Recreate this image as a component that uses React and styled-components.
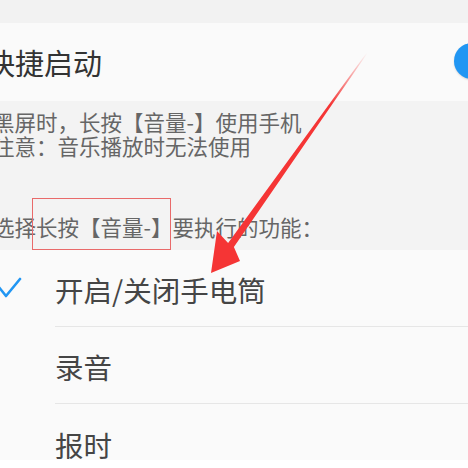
import React from "react";
import styled, { createGlobalStyle } from "styled-components";

const Global = createGlobalStyle`
  html, body { margin: 0; padding: 0; background: #ffffff; overflow: hidden; }
  body { width: 468px; height: 468px; position: relative; font-family: "Noto Sans CJK SC", "Noto Sans", sans-serif; }
`;

const Frame = styled.div`
  width: 504px;
  margin-left: -14px;
  display: flex;
  flex-direction: column;
`;

const TopBand = styled.div`
  height: 23px;
  background: #f2f2f2;
`;

const SwitchRow = styled.div`
  height: 78px;
  background: #fafafa;
  display: flex;
  align-items: center;
  justify-content: space-between;
`;

const Title = styled.span`
  font-size: 29px;
  line-height: 34px;
  color: #333333;
`;

const Knob = styled.span`
  width: 36px;
  height: 36px;
  border-radius: 50%;
  background: #2196f3;
  box-shadow: 0 1px 2px rgba(0, 0, 0, 0.15);
  margin-top: -2px;
`;

const Desc = styled.div`
  background: #f3f3f3;
  padding: 9px 0 11px 7px;
  display: flex;
  flex-direction: column;
`;

const Para = styled.p`
  margin: ${(p) => p.$gap || 0}px 0 0;
  font-size: 21.5px;
  line-height: 24px;
  color: #666666;
  white-space: nowrap;
`;

const List = styled.div`
  background: #fafafa;
  display: flex;
  flex-direction: column;
  height: 210px;
  overflow: hidden;
`;

const Item = styled.div`
  height: 77px;
  flex: none;
  display: flex;
  align-items: stretch;
`;

const CheckCol = styled.div`
  width: 69px;
  flex: none;
  display: flex;
  align-items: center;
`;

const Label = styled.div`
  flex: 1;
  display: flex;
  align-items: center;
  padding-top: 3px;
  font-size: 28.5px;
  color: #454545;
  border-bottom: ${(p) => (p.$last ? "none" : "1px solid #e6e6e6")};
`;

const Overlay = styled.svg`
  position: absolute;
  left: 0;
  top: 0;
  width: 468px;
  height: 468px;
  pointer-events: none;
`;

const MarkBox = styled.div`
  position: absolute;
  left: 32px;
  top: 198px;
  width: 137px;
  height: 50px;
  border: 1px solid #e96a6a;
  pointer-events: none;
`;

const Check = () => (
  <svg width="28" height="22" viewBox="0 0 28 22" style={{ marginLeft: 8, marginTop: -2 }}>
    <path d="M4 9 L12 19 L26 2" fill="none" stroke="#2196f3" strokeWidth="2.6" strokeLinecap="round" strokeLinejoin="round" />
  </svg>
);

const items = ["开启/关闭手电筒", "录音", "报时"];

export default function App() {
  return (
    <>
      <Global />
      <Frame>
        <TopBand />
        <SwitchRow>
          <Title>快捷启动</Title>
          <Knob />
        </SwitchRow>
        <Desc>
          <Para>黑屏时，长按【音量-】使用手机</Para>
          <Para>注意：音乐播放时无法使用</Para>
          <Para $gap={57}>选择长按【音量-】要执行的功能：</Para>
        </Desc>
        <List>
          {items.map((t, i) => (
            <Item key={t}>
              <CheckCol>{i === 0 && <Check />}</CheckCol>
              <Label $last={i === items.length - 1}>{t}</Label>
            </Item>
          ))}
        </List>
      </Frame>
      <MarkBox />
      <Overlay viewBox="0 0 468 468">
        <defs>
          <linearGradient id="fade" gradientUnits="userSpaceOnUse" x1="367" y1="53" x2="330" y2="105">
            <stop offset="0" stopColor="#f53535" stopOpacity="0" />
            <stop offset="1" stopColor="#f53535" stopOpacity="1" />
          </linearGradient>
        </defs>
        <polygon
          points="366.6,52.7 228.1,243 217,231 211,273 240,261 233.9,247 367.4,53.3"
          fill="url(#fade)"
        />
      </Overlay>
    </>
  );
}
